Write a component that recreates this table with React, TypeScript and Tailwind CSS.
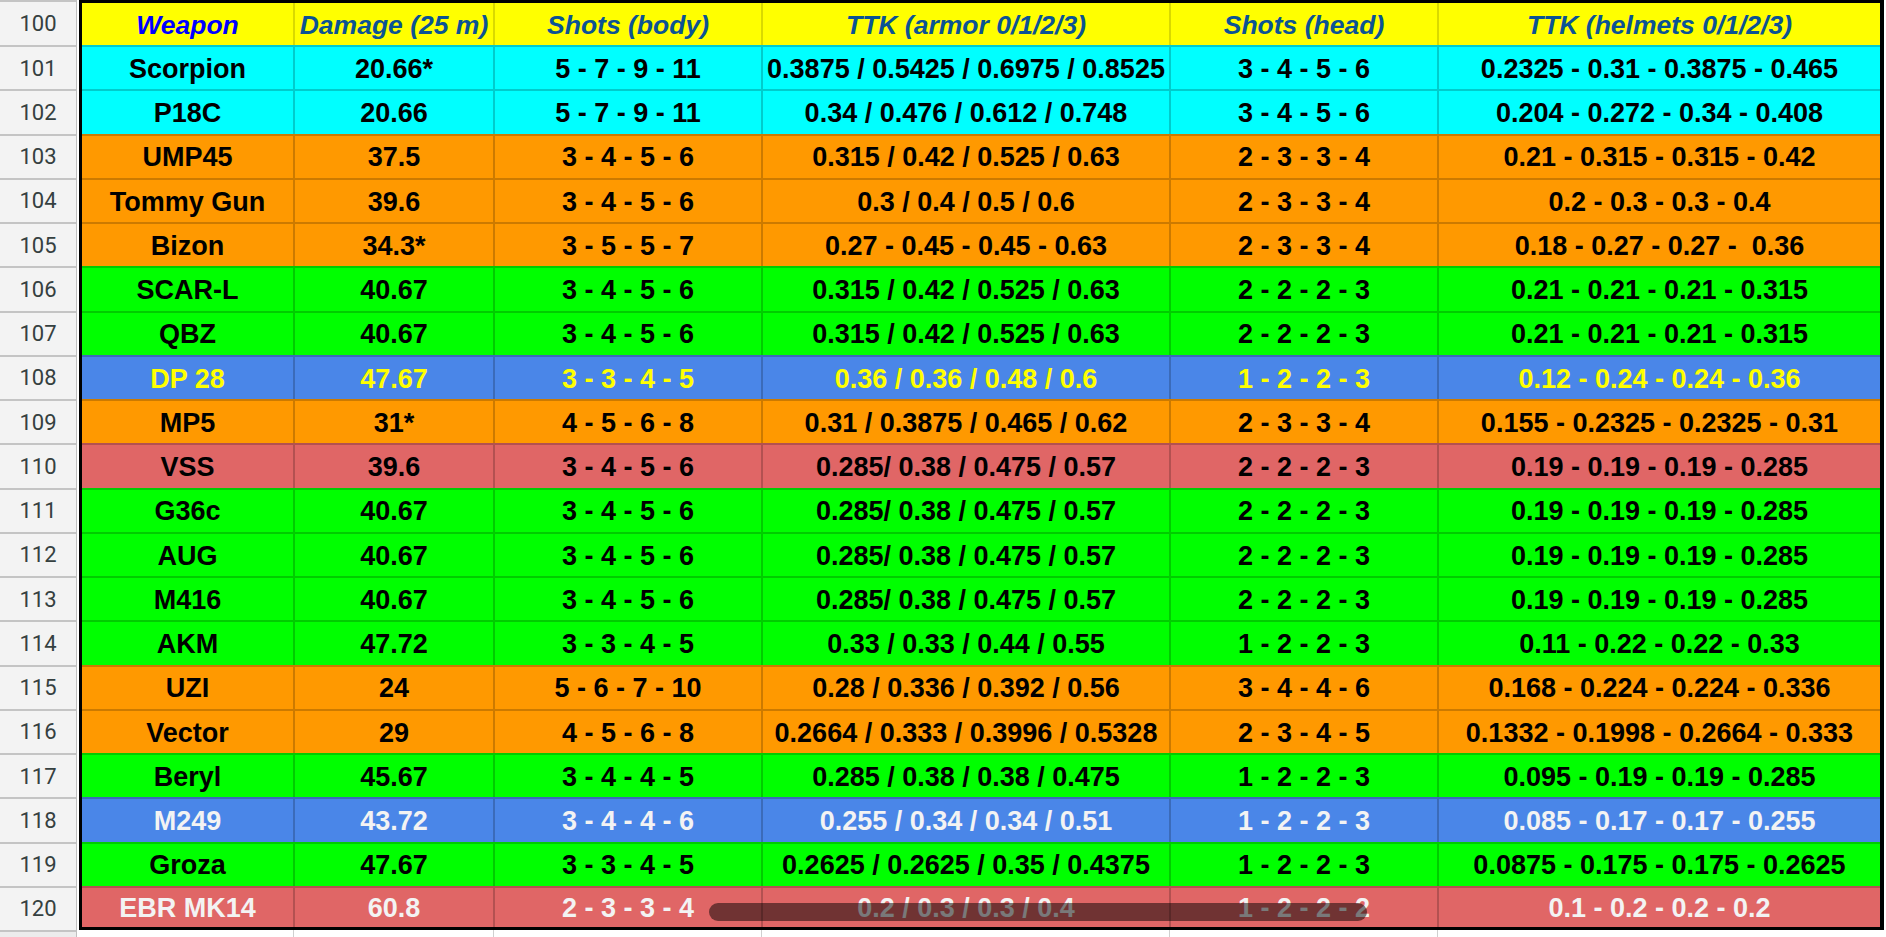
import React from "react";

type Row = {
  n: number;
  bg: string;
  fg: string;
  cells: string[];
};

const CYAN = "bg-[#00ffff]";
const ORANGE = "bg-[#ff9900]";
const GREEN = "bg-[#00ff00]";
const BLUE = "bg-[#4a86e8]";
const RED = "bg-[#e06666]";

const rows: Row[] = [
  { n: 101, bg: CYAN, fg: "text-black", cells: ["Scorpion", "20.66*", "5 - 7 - 9 - 11", "0.3875 / 0.5425 / 0.6975 / 0.8525", "3 - 4 - 5 - 6", "0.2325 - 0.31 - 0.3875 - 0.465"] },
  { n: 102, bg: CYAN, fg: "text-black", cells: ["P18C", "20.66", "5 - 7 - 9 - 11", "0.34 / 0.476 / 0.612 / 0.748", "3 - 4 - 5 - 6", "0.204 - 0.272 - 0.34 - 0.408"] },
  { n: 103, bg: ORANGE, fg: "text-black", cells: ["UMP45", "37.5", "3 - 4 - 5 - 6", "0.315 / 0.42 / 0.525 / 0.63", "2 - 3 - 3 - 4", "0.21 - 0.315 - 0.315 - 0.42"] },
  { n: 104, bg: ORANGE, fg: "text-black", cells: ["Tommy Gun", "39.6", "3 - 4 - 5 - 6", "0.3 / 0.4 / 0.5 / 0.6", "2 - 3 - 3 - 4", "0.2 - 0.3 - 0.3 - 0.4"] },
  { n: 105, bg: ORANGE, fg: "text-black", cells: ["Bizon", "34.3*", "3 - 5 - 5 - 7", "0.27 - 0.45 - 0.45 - 0.63", "2 - 3 - 3 - 4", "0.18 - 0.27 - 0.27 -  0.36"] },
  { n: 106, bg: GREEN, fg: "text-black", cells: ["SCAR-L", "40.67", "3 - 4 - 5 - 6", "0.315 / 0.42 / 0.525 / 0.63", "2 - 2 - 2 - 3", "0.21 - 0.21 - 0.21 - 0.315"] },
  { n: 107, bg: GREEN, fg: "text-black", cells: ["QBZ", "40.67", "3 - 4 - 5 - 6", "0.315 / 0.42 / 0.525 / 0.63", "2 - 2 - 2 - 3", "0.21 - 0.21 - 0.21 - 0.315"] },
  { n: 108, bg: BLUE, fg: "text-[#ffff00]", cells: ["DP 28", "47.67", "3 - 3 - 4 - 5", "0.36 / 0.36 / 0.48 / 0.6", "1 - 2 - 2 - 3", "0.12 - 0.24 - 0.24 - 0.36"] },
  { n: 109, bg: ORANGE, fg: "text-black", cells: ["MP5", "31*", "4 - 5 - 6 - 8", "0.31 / 0.3875 / 0.465 / 0.62", "2 - 3 - 3 - 4", "0.155 - 0.2325 - 0.2325 - 0.31"] },
  { n: 110, bg: RED, fg: "text-black", cells: ["VSS", "39.6", "3 - 4 - 5 - 6", "0.285/ 0.38 / 0.475 / 0.57", "2 - 2 - 2 - 3", "0.19 - 0.19 - 0.19 - 0.285"] },
  { n: 111, bg: GREEN, fg: "text-black", cells: ["G36c", "40.67", "3 - 4 - 5 - 6", "0.285/ 0.38 / 0.475 / 0.57", "2 - 2 - 2 - 3", "0.19 - 0.19 - 0.19 - 0.285"] },
  { n: 112, bg: GREEN, fg: "text-black", cells: ["AUG", "40.67", "3 - 4 - 5 - 6", "0.285/ 0.38 / 0.475 / 0.57", "2 - 2 - 2 - 3", "0.19 - 0.19 - 0.19 - 0.285"] },
  { n: 113, bg: GREEN, fg: "text-black", cells: ["M416", "40.67", "3 - 4 - 5 - 6", "0.285/ 0.38 / 0.475 / 0.57", "2 - 2 - 2 - 3", "0.19 - 0.19 - 0.19 - 0.285"] },
  { n: 114, bg: GREEN, fg: "text-black", cells: ["AKM", "47.72", "3 - 3 - 4 - 5", "0.33 / 0.33 / 0.44 / 0.55", "1 - 2 - 2 - 3", "0.11 - 0.22 - 0.22 - 0.33"] },
  { n: 115, bg: ORANGE, fg: "text-black", cells: ["UZI", "24", "5 - 6 - 7 - 10", "0.28 / 0.336 / 0.392 / 0.56", "3 - 4 - 4 - 6", "0.168 - 0.224 - 0.224 - 0.336"] },
  { n: 116, bg: ORANGE, fg: "text-black", cells: ["Vector", "29", "4 - 5 - 6 - 8", "0.2664 / 0.333 / 0.3996 / 0.5328", "2 - 3 - 4 - 5", "0.1332 - 0.1998 - 0.2664 - 0.333"] },
  { n: 117, bg: GREEN, fg: "text-black", cells: ["Beryl", "45.67", "3 - 4 - 4 - 5", "0.285 / 0.38 / 0.38 / 0.475", "1 - 2 - 2 - 3", "0.095 - 0.19 - 0.19 - 0.285"] },
  { n: 118, bg: BLUE, fg: "text-[#f3f3f3]", cells: ["M249", "43.72", "3 - 4 - 4 - 6", "0.255 / 0.34 / 0.34 / 0.51", "1 - 2 - 2 - 3", "0.085 - 0.17 - 0.17 - 0.255"] },
  { n: 119, bg: GREEN, fg: "text-black", cells: ["Groza", "47.67", "3 - 3 - 4 - 5", "0.2625 / 0.2625 / 0.35 / 0.4375", "1 - 2 - 2 - 3", "0.0875 - 0.175 - 0.175 - 0.2625"] },
  { n: 120, bg: RED, fg: "text-[#f3f3f3]", cells: ["EBR MK14", "60.8", "2 - 3 - 3 - 4", "0.2 / 0.3 / 0.3 / 0.4", "1 - 2 - 2 - 2", "0.1 - 0.2 - 0.2 - 0.2"] },
];

const widths = ["w-[211px]", "w-[200px]", "w-[268px]", "w-[408px]", "w-[268px]", "w-[443px]"];

const headers = ["Weapon", "Damage (25 m)", "Shots (body)", "TTK (armor 0/1/2/3)", "Shots (head)", "TTK (helmets 0/1/2/3)"];

export default function App() {
  return (
    <div className="relative flex h-[937px] w-[1886px] overflow-hidden bg-white">
      {/* Row headers */}
      <div className="flex w-[77px] shrink-0 flex-col border-r border-[#c0c0c0] bg-[#f3f3f3] text-[22px] text-[#354040] [font-family:Roboto,'Liberation_Sans',sans-serif]">
        <div className="flex h-[45px] shrink-0 items-center justify-center border-t-2 border-[#c4c4c4]">100</div>
        {rows.map((r) => (
          <div
            key={r.n}
            className="flex h-[44.25px] shrink-0 items-center justify-center border-t-2 border-[#c4c4c4]"
          >
            {r.n}
          </div>
        ))}
        <div className="flex-1 border-t-2 border-[#c4c4c4] bg-[#ececec]" />
      </div>

      {/* Table area */}
      <div className="ml-[2px] flex flex-col">
        <div className="flex h-[930px] w-[1805px] shrink-0 flex-col border-[3px] border-r-4 border-black font-bold text-[27px] [font-family:'Liberation_Sans',Arial,sans-serif]">
          {/* Header */}
          <div className="flex h-[42px] shrink-0 bg-[#ffff00] text-[26.5px] italic">
            {headers.map((h, i) => (
              <div
                key={h}
                className={`${widths[i]} flex shrink-0 items-center justify-center whitespace-pre pt-[4px] ${
                  i === 0 ? "text-[#0000ff]" : "border-l-2 border-black/15 text-[#0b5394]"
                }`}
              >
                {h}
              </div>
            ))}
          </div>
          {rows.map((r, ri) => (
            <div
              key={r.n}
              className={`flex shrink-0 border-t-2 border-black/20 ${r.bg} ${r.fg} ${
                ri === rows.length - 1 ? "min-h-0 flex-1" : "h-[44.25px]"
              }`}
            >
              {r.cells.map((c, i) => (
                <div
                  key={i}
                  className={`${widths[i]} flex shrink-0 items-center justify-center whitespace-pre pt-[2px] ${
                    i === 0 ? "" : "border-l-2 border-black/20"
                  }`}
                >
                  {c}
                </div>
              ))}
            </div>
          ))}
        </div>
        {/* Partial next row below the table */}
        <div className="flex flex-1 pl-[3px]">
          {widths.map((w, i) => (
            <div key={i} className={`${w} shrink-0 ${i === 0 ? "" : "border-l border-[#d0d0d0]"}`} />
          ))}
        </div>
      </div>

      {/* Horizontal scrollbar overlay */}
      <div className="absolute left-[709px] top-[903px] h-[18px] w-[658px] rounded-full bg-black/50" />
    </div>
  );
}
